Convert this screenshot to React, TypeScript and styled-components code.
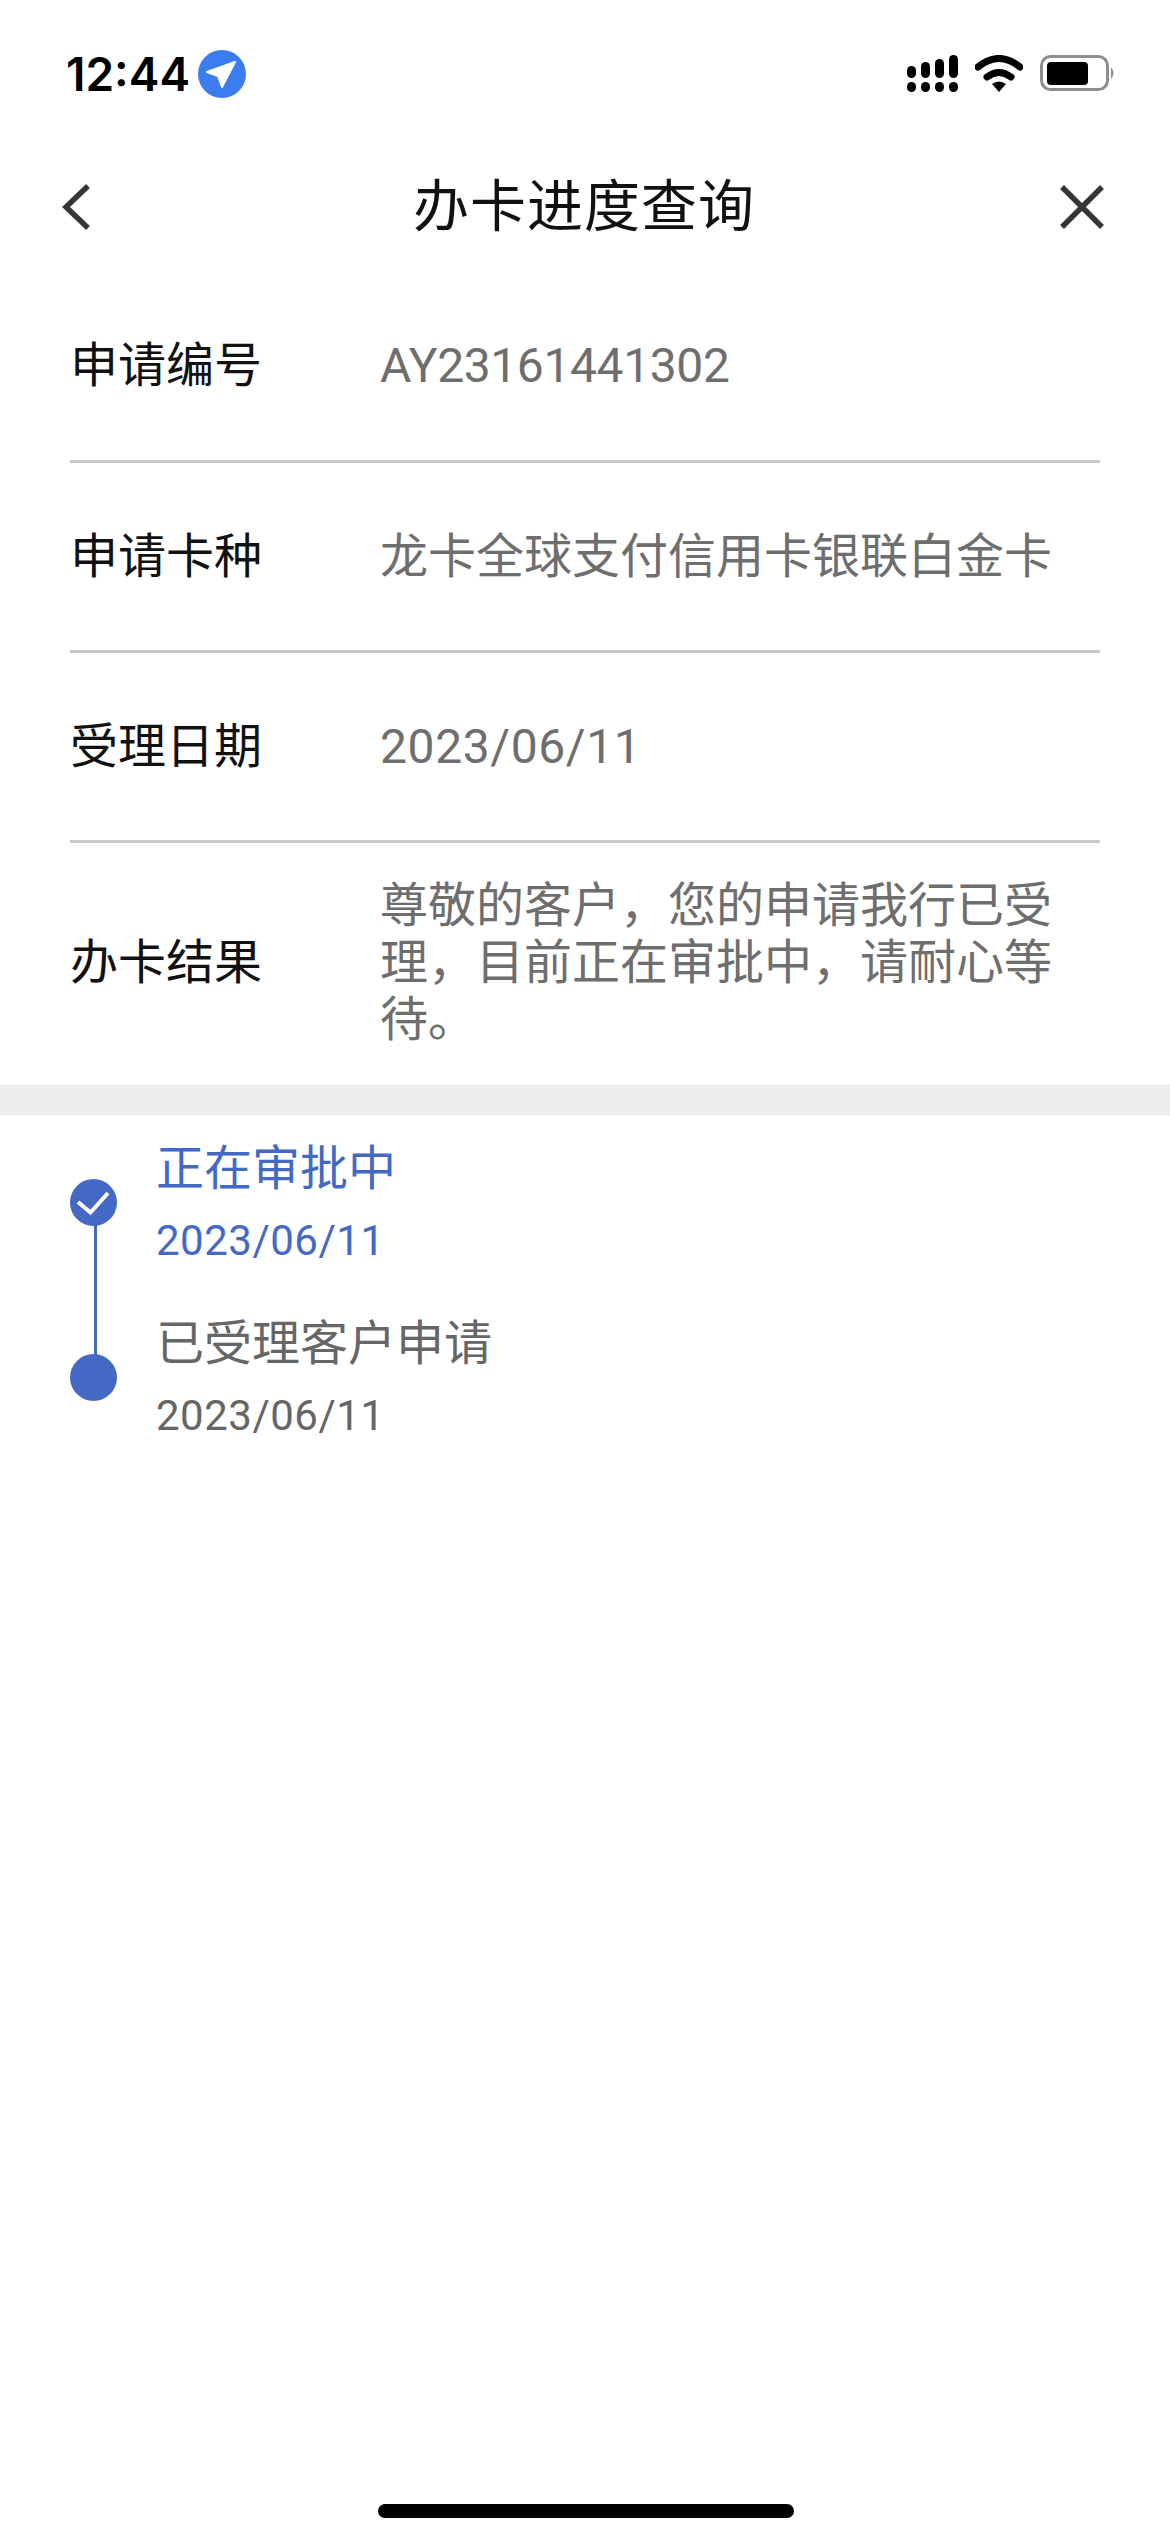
import React from "react";
import styled, { createGlobalStyle } from "styled-components";

const GlobalStyle = createGlobalStyle`
  html, body {
    margin: 0;
    padding: 0;
    background: #ffffff;
  }
  body {
    font-family: Roboto, "Noto Sans CJK SC", sans-serif;
  }
`;

const Page = styled.div`
  position: relative;
  width: 1170px;
  height: 2532px;
  background: #fff;
  overflow: hidden;
`;

const StatusBar = styled.div`
  height: 146px;
  box-sizing: border-box;
  padding: 50px 54px 0 66px;
  display: flex;
  align-items: flex-start;
  justify-content: space-between;
`;

const TimeGroup = styled.div`
  display: flex;
  align-items: center;
  gap: 8px;
  height: 48px;
`;

const Time = styled.span`
  font-family: Inter, "Liberation Sans", sans-serif;
  font-size: 46px;
  font-weight: 600;
  color: #000;
  line-height: 48px;
`;

const StatusIcons = styled.div`
  display: flex;
  align-items: center;
  gap: 17px;
  height: 48px;
`;

const NavBar = styled.div`
  height: 125px;
  box-sizing: border-box;
  padding: 0 60px 4px 58px;
  display: flex;
  align-items: center;
  justify-content: space-between;
`;

const NavTitle = styled.div`
  font-size: 56px;
  letter-spacing: 1px;
  color: #111;
  line-height: 80px;
`;

const NavIcon = styled.svg`
  width: 56px;
  height: 56px;
  display: block;
`;

const InfoList = styled.div`
  padding: 0 70px;
`;

const Row = styled.div<{ $height: number; $last?: boolean }>`
  height: ${(p) => p.$height}px;
  display: flex;
  align-items: center;
  box-sizing: border-box;
  border-bottom: 3px solid ${(p) => (p.$last ? "transparent" : "#c9c9c9")};
`;

const Label = styled.div`
  width: 310px;
  flex: none;
  font-size: 48px;
  color: #111;
  line-height: 57px;
`;

const Value = styled.div<{ $spacing?: number }>`
  width: 680px;
  font-size: 48px;
  letter-spacing: ${(p) => p.$spacing ?? 0}px;
  color: #6e6e6e;
  line-height: 57px;
`;

const Band = styled.div`
  height: 30px;
  background: #eeeeee;
`;

const Timeline = styled.div`
  padding: 22px 0 0 70px;
  display: flex;
  flex-direction: column;
`;

const Step = styled.div`
  display: flex;
  height: 175px;
`;

const Rail = styled.div`
  width: 47px;
  flex: none;
  margin-right: 39px;
  position: relative;
`;

const Dot = styled.div`
  position: absolute;
  left: 0;
  top: 42px;
  width: 47px;
  height: 47px;
  border-radius: 50%;
  background: #4469c5;
`;

const Line = styled.div`
  position: absolute;
  left: 24px;
  top: 84px;
  width: 3px;
  height: 140px;
  background: #4469c5;
`;

const StepTitle = styled.div<{ $active?: boolean }>`
  font-size: 48px;
  line-height: 64px;
  color: ${(p) => (p.$active ? "#4469c5" : "#666666")};
`;

const StepDate = styled.div<{ $active?: boolean }>`
  font-size: 42px;
  letter-spacing: 0.5px;
  line-height: 50px;
  margin-top: 15px;
  color: ${(p) => (p.$active ? "#4469c5" : "#666666")};
`;

const HomeBar = styled.div`
  position: absolute;
  left: 378px;
  bottom: 14px;
  width: 416px;
  height: 14px;
  border-radius: 7px;
  background: #000;
`;

const rows = [
  { label: "申请编号", value: "AY23161441302", height: 192, spacing: -0.4 },
  { label: "申请卡种", value: "龙卡全球支付信用卡银联白金卡", height: 190 },
  { label: "受理日期", value: "2023/06/11", height: 190, spacing: 0.6 },
  {
    label: "办卡结果",
    value: "尊敬的客户，您的申请我行已受理，目前正在审批中，请耐心等待。",
    height: 242,
    last: true,
  },
];

const App: React.FC = () => {
  return (
    <Page>
      <GlobalStyle />
      <StatusBar>
        <TimeGroup>
          <Time>12:44</Time>
          <svg width="48" height="48" viewBox="0 0 48 48">
            <circle cx="24" cy="24" r="24" fill="#3b7df0" />
            <path d="M37 12 L9 22 L20 26 L24 37 Z" fill="#fff" stroke="#fff" strokeWidth="2" strokeLinejoin="round" />
          </svg>
        </TimeGroup>
        <StatusIcons>
          <svg width="51" height="38" viewBox="0 0 51 38">
            <rect x="0" y="11" width="9" height="12" rx="4.5" />
            <rect x="14" y="7" width="9" height="16" rx="4.5" />
            <rect x="28" y="4" width="9" height="19" rx="4.5" />
            <rect x="42" y="0" width="9" height="23" rx="4.5" />
            <rect x="0" y="27" width="9" height="10" rx="4.5" />
            <rect x="14" y="27" width="9" height="10" rx="4.5" />
            <rect x="28" y="27" width="9" height="10" rx="4.5" />
            <rect x="42" y="27" width="9" height="10" rx="4.5" />
          </svg>
          <svg width="48" height="38" viewBox="0 0 48 38">
            <path d="M3 12 Q24 -5 45 12" fill="none" stroke="#000" strokeWidth="7" strokeLinecap="round" />
            <path d="M12 22 Q24 13 36 22" fill="none" stroke="#000" strokeWidth="7" strokeLinecap="round" />
            <path d="M17 29 Q24 24 31 29 L24 37 Z" fill="#000" />
          </svg>
          <svg width="76" height="38" viewBox="0 0 76 38">
            <rect x="1.5" y="1.5" width="66" height="33" rx="9" fill="none" stroke="#8e8e8e" strokeWidth="3" />
            <rect x="7" y="7" width="41" height="23" rx="4" fill="#000" />
            <path d="M71 12 Q76 18 71 24 Z" fill="#8e8e8e" />
          </svg>
        </StatusIcons>
      </StatusBar>
      <NavBar>
        <NavIcon viewBox="0 0 56 56">
          <path d="M30 7 L8 28 L30 49" fill="none" stroke="#363636" strokeWidth="5.5" />
        </NavIcon>
        <NavTitle>办卡进度查询</NavTitle>
        <NavIcon viewBox="0 0 56 56">
          <path d="M8 8 L48 48 M48 8 L8 48" fill="none" stroke="#363636" strokeWidth="5.5" />
        </NavIcon>
      </NavBar>
      <InfoList>
        {rows.map((r) => (
          <Row key={r.label} $height={r.height} $last={r.last}>
            <Label>{r.label}</Label>
            <Value $spacing={r.spacing}>{r.value}</Value>
          </Row>
        ))}
      </InfoList>
      <Band />
      <Timeline>
        <Step>
          <Rail>
            <Line />
            <Dot>
              <svg width="47" height="47" viewBox="0 0 47 47">
                <path d="M8 23 L20.5 33.5 L38 14" fill="none" stroke="#fff" strokeWidth="4" />
              </svg>
            </Dot>
          </Rail>
          <div>
            <StepTitle $active>正在审批中</StepTitle>
            <StepDate $active>2023/06/11</StepDate>
          </div>
        </Step>
        <Step>
          <Rail>
            <Dot />
          </Rail>
          <div>
            <StepTitle>已受理客户申请</StepTitle>
            <StepDate>2023/06/11</StepDate>
          </div>
        </Step>
      </Timeline>
      <HomeBar />
    </Page>
  );
};

export default App;
